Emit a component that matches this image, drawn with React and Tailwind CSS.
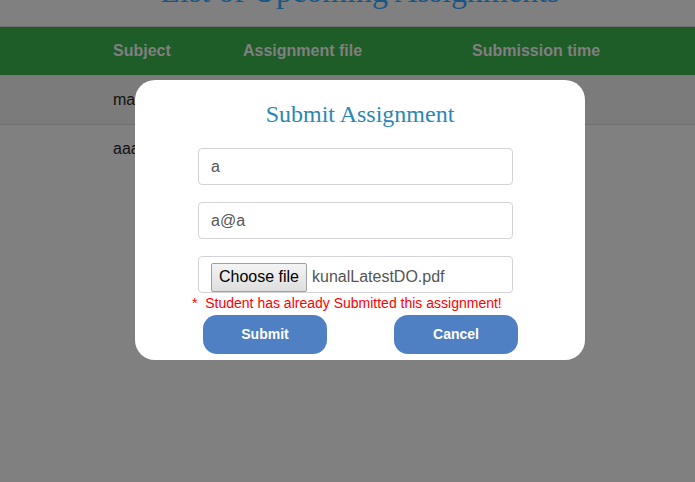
export default function App() {
  const arial = { fontFamily: '"Liberation Sans", Arial, sans-serif' };
  const serif = { fontFamily: '"Liberation Serif", "Times New Roman", serif' };
  return (
    <div className="relative w-[695px] h-[482px] overflow-hidden bg-[#808080]" style={arial}>
      {/* underlying page (dimmed) */}
      <div className="h-[26px] flex justify-center pl-[25px]">
        <h1 className="mt-[-25px] text-[32px] leading-[32px] text-[#1a5683] whitespace-nowrap" style={serif}>
          List of Upcoming Assignments
        </h1>
      </div>
      <div className="border-t border-[#707070] h-[49px] bg-[#1e5c28] flex items-center pl-[113px] text-[16px] font-bold text-[#808080]">
        <span className="w-[130px]">Subject</span>
        <span className="w-[229px]">Assignment file</span>
        <span>Submission time</span>
      </div>
      <div className="h-[50px] bg-[#7b7b7b] border-b border-[#707070] flex items-center pl-[113px] text-[16px] text-[#111]">
        ma
      </div>
      <div className="h-[48px] flex items-center pl-[113px] text-[16px] text-[#111]">aaa</div>

      {/* modal */}
      <div className="absolute left-[135px] top-[80px] w-[450px] h-[280px] bg-white rounded-[20px] pt-[20px]">
        <h2 className="text-center text-[24px] leading-[28px] text-[#2a87b3]" style={serif}>
          Submit Assignment
        </h2>
        <div className="ml-[63px] mt-[20px] flex flex-col gap-[17px] w-[315px]">
          <div className="h-[37px] border border-[#d4d4d8] rounded-[4px] flex items-center pl-[12px] text-[16px] text-[#555]">
            a
          </div>
          <div className="h-[37px] border border-[#d4d4d8] rounded-[4px] flex items-center pl-[12px] text-[16px] text-[#555]">
            a@a
          </div>
          <div className="h-[37px] border border-[#d4d4d8] rounded-[4px] flex items-center pl-[12px] text-[16px] text-[#555]">
            <span className="mt-[5px] h-[29px] w-[96px] flex items-center justify-center border border-[#a0a0a0] rounded-[2px] bg-gradient-to-b from-[#f4f4f4] to-[#dedede] text-black">
              Choose file
            </span>
            <span className="ml-[5px] mt-[5px]">kunalLatestDO.pdf</span>
          </div>
        </div>
        <div className="ml-[57px] mt-[2px] h-[16px] leading-[16px] text-[14px] text-[#ff0000] whitespace-pre">
          {"*  Student has already Submitted this assignment!"}
        </div>
        <div className="ml-[68px] mt-[4px] flex gap-[67px]">
          <button className="w-[124px] h-[39px] rounded-[14px] bg-[#4f80c4] text-white font-bold text-[14px]">
            Submit
          </button>
          <button className="w-[124px] h-[39px] rounded-[14px] bg-[#4f80c4] text-white font-bold text-[14px]">
            Cancel
          </button>
        </div>
      </div>
    </div>
  );
}
